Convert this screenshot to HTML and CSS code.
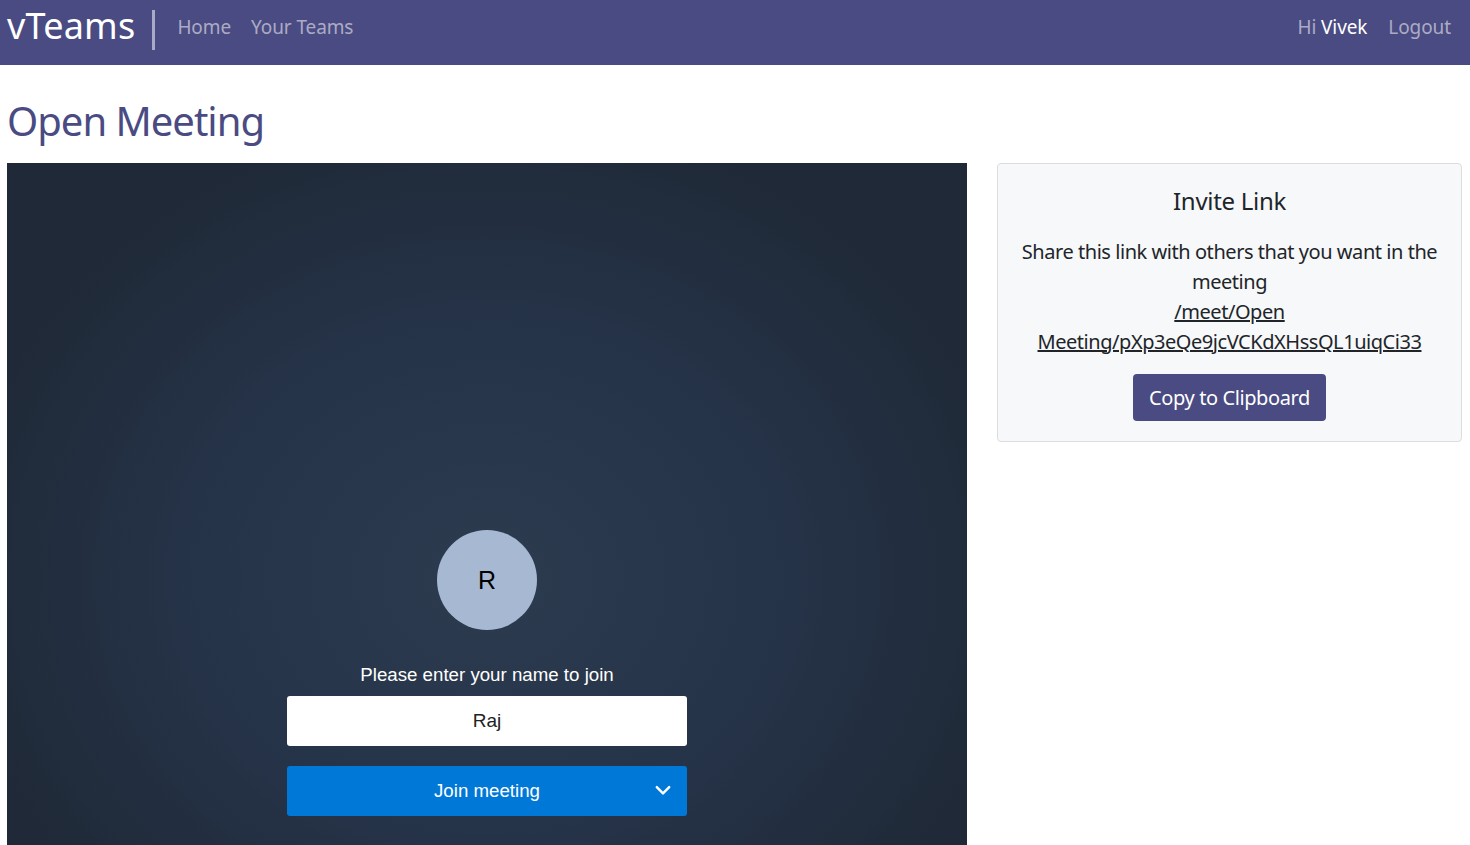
FILE: index.html
```html
<!DOCTYPE html>
<html lang="en">
<head>
<meta charset="utf-8">
<title>vTeams - Open Meeting</title>
<link rel="stylesheet" href="styles.css">
</head>
<body>
<header class="navbar">
  <div class="nav-left">
    <a class="brand" href="#">vTeams</a>
    <span class="divider"></span>
    <nav class="nav-links">
      <a href="#">Home</a>
      <a href="#">Your Teams</a>
    </nav>
  </div>
  <div class="nav-right">
    <span class="greeting">Hi <strong>Vivek</strong></span>
    <a href="#">Logout</a>
  </div>
</header>
<main class="page">
  <h1 class="title">Open Meeting</h1>
  <div class="content">
    <section class="video">
      <div class="prejoin">
        <div class="avatar">R</div>
        <p class="prompt">Please enter your name to join</p>
        <div class="name-input">Raj</div>
        <button class="join-btn"><span>Join meeting</span>
          <svg class="chev" width="18" height="18" viewBox="0 0 16 16"><path d="M2.5 5.5 L8 11 L13.5 5.5" fill="none" stroke="#fff" stroke-width="2.2" stroke-linecap="round" stroke-linejoin="round"/></svg>
        </button>
      </div>
    </section>
    <aside class="card">
      <h2 class="card-title">Invite Link</h2>
      <p class="card-text">Share this link with others that you want in the meeting<br><a href="#">/meet/Open Meeting/pXp3eQe9jcVCKdXHssQL1uiqCi33</a></p>
      <button class="copy-btn">Copy to Clipboard</button>
    </aside>
  </div>
</main>
</body>
</html>
```

FILE: styles.css
```css
* { box-sizing: border-box; }
html, body { margin: 0; padding: 0; }
body {
  font-family: "Noto Sans", "Open Sans", sans-serif;
  color: #212529;
  background: #fff;
  overflow: hidden;
}
a { text-decoration: none; color: inherit; }

.navbar {
  height: 65px;
  background: #4a4b82;
  display: flex;
  align-items: center;
  justify-content: space-between;
  padding: 0 19px 9px 7px;
}
.nav-left, .nav-right { display: flex; align-items: center; }
.brand {
  color: #fff;
  font-size: 36px;
  line-height: 1;
  letter-spacing: 0.2px;
  padding-bottom: 4px;
}
.divider {
  width: 3px;
  height: 40px;
  background: #a9aac6;
  margin: 4px 22px 0 17px;
}
.nav-links { display: flex; gap: 20px; padding-bottom: 3px; }
.nav-links a, .nav-right a, .greeting {
  color: rgba(255,255,255,0.55);
  font-size: 19px;
  letter-spacing: -0.1px;
}
.nav-right { gap: 21px; padding-bottom: 3px; }
.greeting strong { color: #fff; font-weight: 400; }

.page { padding: 0 8px 0 7px; }
.title {
  margin: 32px 0 18px;
  font-size: 40px;
  font-weight: 400;
  line-height: 1.2;
  letter-spacing: -1px;
  color: #4a4b82;
}
.content {
  display: flex;
  gap: 30px;
  align-items: flex-start;
}
.video {
  width: 960px;
  height: 800px;
  flex: none;
  background: radial-gradient(ellipse at 50% 52%, #2c3b4e 0%, #26344a 40%, #1f2937 80%);
  display: flex;
  justify-content: center;
  padding-top: 367px;
}
.prejoin {
  width: 400px;
  display: flex;
  flex-direction: column;
  align-items: center;
  font-family: "Liberation Sans", Arial, sans-serif;
}
.avatar {
  width: 100px;
  height: 100px;
  border-radius: 50%;
  background: #a6b8d2;
  color: #000;
  font-size: 25px;
  display: flex;
  align-items: center;
  justify-content: center;
}
.prompt {
  margin: 33px 0 9px;
  color: #fff;
  font-size: 18.7px;
  line-height: 24px;
}
.name-input {
  width: 400px;
  height: 50px;
  background: #fff;
  border-radius: 3px;
  display: flex;
  align-items: center;
  justify-content: center;
  font-size: 19px;
  color: #222;
}
.join-btn {
  margin-top: 20px;
  width: 400px;
  height: 50px;
  border: 0;
  border-radius: 3px;
  background: #0078d7;
  color: #fff;
  font-family: inherit;
  font-size: 18.7px;
  position: relative;
  display: flex;
  align-items: center;
  justify-content: center;
}
.chev { position: absolute; right: 15px; top: 15px; }

.card {
  flex: 1;
  background: #f7f8fa;
  border: 1px solid #dcdde0;
  border-radius: 4px;
  padding: 23px 16px 20px;
  text-align: center;
}
.card-title {
  margin: 0 0 21px;
  font-size: 24px;
  font-weight: 400;
  line-height: 1.2;
  letter-spacing: -0.3px;
}
.card-text {
  margin: 0 0 17px;
  font-size: 20px;
  line-height: 30px;
  letter-spacing: -0.45px;
}
.card-text a { text-decoration: underline; color: #212529; }
.copy-btn {
  background: #4a4b82;
  color: #fff;
  border: 0;
  border-radius: 4px;
  font-family: inherit;
  font-size: 20px;
  letter-spacing: -0.4px;
  padding: 0 16px;
  height: 47px;
}
```
